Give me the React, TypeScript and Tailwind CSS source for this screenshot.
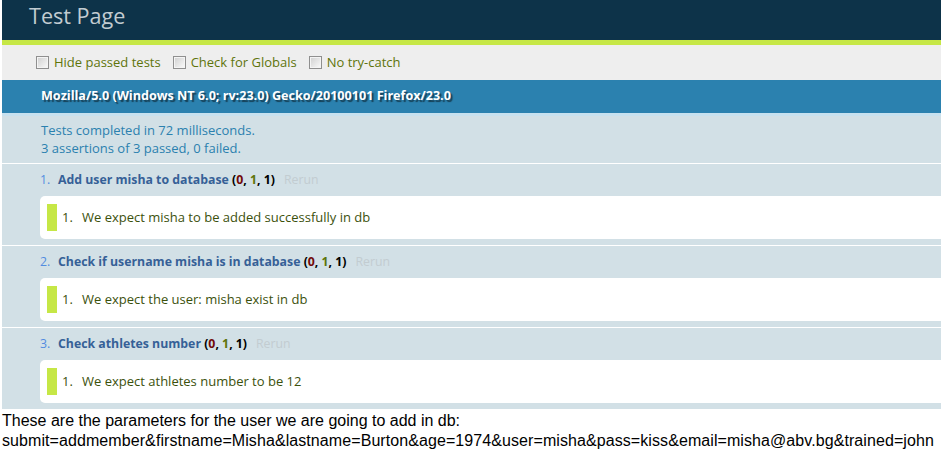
import React from "react";

const font = "font-['Open_Sans','Noto_Sans',sans-serif]";

function Checkbox({ label }: { label: string }) {
  return (
    <label className="flex items-center mr-[12px]">
      <span className="inline-block w-[13px] h-[13px] border border-[#8f8f8f] bg-linear-to-br from-[#cfcfcf] to-[#fbfbfb] mr-[5px] shadow-[inset_0_0_0_1px_#f4f4f4]" />
      <span>{label}</span>
    </label>
  );
}

type Test = { name: string; msg: string };

const tests: Test[] = [
  { name: "Add user misha to database", msg: "We expect misha to be added successfully in db" },
  { name: "Check if username misha is in database", msg: "We expect the user: misha exist in db" },
  { name: "Check athletes number", msg: "We expect athletes number to be 12" },
];

export default function App() {
  return (
    <div className="min-h-screen bg-white">
      <div className={`ml-[2px] ${font}`}>
        <div className="h-[40px] bg-[#0d3349] pl-[27px] pt-[3px] text-[21.6px] leading-[26px] text-[#c2ccd1]">
          Test Page
        </div>
        <div className="h-[5px] bg-[#c6e746]" />
        <div className="h-[35px] bg-[#eeeeee] flex items-center pl-[34px] text-[13px] text-[#5e740b]">
          <Checkbox label="Hide passed tests" />
          <Checkbox label="Check for Globals" />
          <Checkbox label="No try-catch" />
        </div>
        <div className="h-[33px] bg-[#2b81af] flex items-center pl-[39px] text-white font-bold text-[12.6px] [text-shadow:rgba(0,0,0,0.5)_2px_2px_1px]">
          Mozilla/5.0 (Windows NT 6.0; rv:23.0) Gecko/20100101 Firefox/23.0
        </div>
        <div className="h-[3px] bg-[#c7e1ef]" />
        <div className="bg-[#d2e0e6] pl-[39px] pt-[5px] pb-[6px] border-b border-white text-[13px] leading-[18px] text-[#2b81af]">
          <div>Tests completed in 72 milliseconds.</div>
          <div>3 assertions of 3 passed, 0 failed.</div>
        </div>
        <ol>
          {tests.map((t, i) => (
            <li key={i} className="bg-[#d2e0e6] border-b border-white pl-[38px] pt-[6px] pb-[6px] text-[12.3px]">
              <div className="h-[20px] leading-[20px] whitespace-nowrap">
                <span className="inline-block w-[18px] text-[#528ce0]">{i + 1}.</span>
                <strong className="text-[#366097] font-bold">{t.name}</strong>{" "}
                <strong className="font-bold text-black">
                  (<span className="text-[#710909]">0</span>, <span className="text-[#5e740b]">1</span>, 1)
                </strong>
                <span className="ml-[9px] text-[#c2ccd1]">Rerun</span>
              </div>
              <div className="mt-[6px] bg-white rounded-l-[5px] pl-[7px] py-[8px]">
                <div className="border-l-[10px] border-[#c6e746] pl-[5px] py-[5px] leading-[17px] text-[#3c510c] text-[13px]">
                  <span className="inline-block w-[20px]">1.</span>
                  {t.msg}
                </div>
              </div>
            </li>
          ))}
        </ol>
      </div>
      <div className="pl-[2px] pt-[1px] font-['Liberation_Sans',Arial,sans-serif] text-[16px] leading-[20px] text-black whitespace-nowrap">
        <div>These are the parameters for the user we are going to add in db:</div>
        <div className="tracking-[0.08px]">submit=addmember&amp;firstname=Misha&amp;lastname=Burton&amp;age=1974&amp;user=misha&amp;pass=kiss&amp;email=misha@abv.bg&amp;trained=john</div>
      </div>
    </div>
  );
}
